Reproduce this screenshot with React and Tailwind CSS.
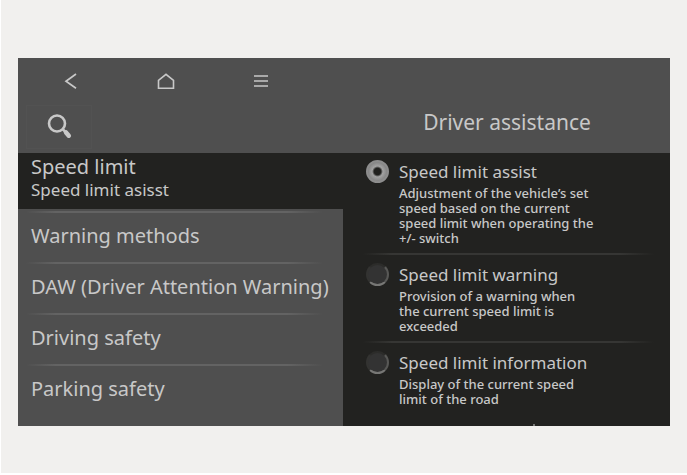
import { useState } from "react";

const menuItems = [
  "Warning methods",
  "DAW (Driver Attention Warning)",
  "Driving safety",
  "Parking safety",
];

const options = [
  {
    id: "assist",
    title: "Speed limit assist",
    description:
      "Adjustment of the vehicle’s set speed based on the current speed limit when operating the +/- switch",
  },
  {
    id: "warning",
    title: "Speed limit warning",
    description: "Provision of a warning when the current speed limit is exceeded",
  },
  {
    id: "information",
    title: "Speed limit information",
    description: "Display of the current speed limit of the road",
  },
];

const BackIcon = () => (
  <svg width="14" height="18" viewBox="0 0 14 18" fill="none" stroke="currentColor" strokeWidth="1.7">
    <path d="M12 2 2 9.200l10 7" />
  </svg>
);

const HomeIcon = () => (
  <svg width="18" height="18" viewBox="0 0 18 18" fill="none" stroke="currentColor" strokeWidth="1.6">
    <path d="M1.500 8.300 9 2.300l7.500 6v8h-15z" />
  </svg>
);

const MenuIcon = () => (
  <svg width="16" height="14" viewBox="0 0 16 14" fill="none" stroke="currentColor" strokeWidth="1.6">
    <path d="M1 2h14M1 7h14M1 12h14" />
  </svg>
);

const SearchIcon = () => (
  <svg width="26" height="26" viewBox="0 0 26 26" fill="none" stroke="currentColor">
    <circle cx="11" cy="9.500" r="8" strokeWidth="2.600" />
    <path d="m16.500 15 3 3" strokeWidth="2.500" />
    <path d="m20 18.500 2.800 3.200" strokeWidth="4.500" strokeLinecap="round" />
  </svg>
);

const App = () => {
  const [selected, setSelected] = useState("assist");

  return (
    <div className="min-h-screen border-b-2 border-l border-white bg-[#f1f0ee] pt-[58px] pr-[17px] pb-[47px] pl-[17px] font-['Noto_Sans',sans-serif] text-[#c8c8c8]">
      <div className="overflow-hidden bg-[#222220]">
        <header className="grid grid-cols-2 bg-[#4f4f4f]">
          <div>
            <nav className="grid h-[46px] grid-cols-[95px_95px_95px] pl-[5px]">
              <button type="button" aria-label="Back" className="flex items-center justify-center">
                <BackIcon />
              </button>
              <button type="button" aria-label="Home" className="flex items-center justify-center">
                <HomeIcon />
              </button>
              <button type="button" aria-label="Menu" className="flex items-center justify-center">
                <MenuIcon />
              </button>
            </nav>
            <div className="h-[49px] pt-px pl-2">
              <button
                type="button"
                aria-label="Search"
                className="flex h-11 w-[66px] items-center justify-center border border-[#525252]"
              >
                <SearchIcon />
              </button>
            </div>
          </div>
          <h1 className="pt-12 text-center text-[21px] leading-8">Driver assistance</h1>
        </header>

        <main className="grid grid-cols-[minmax(0,325fr)_minmax(0,327fr)]">
          <ul className="bg-[#4f4f4f] pb-[13px]">
            <li>
              <button type="button" className="block h-14 w-full bg-[#222220] px-[13px] pb-1.5 text-left">
                <span className="block text-xl leading-6">Speed limit</span>
                <span className="block text-[17px] leading-[22px]">Speed limit asisst</span>
              </button>
            </li>
            {menuItems.map((item) => (
              <li key={item} className="pt-0.5">
                <div className="mr-5 ml-2 h-0.5 bg-[linear-gradient(to_right,transparent,#636363_10%,#636363_88%,transparent)]" />
                <button
                  type="button"
                  className="block h-[47px] w-full px-[13px] pb-0.5 text-left text-xl whitespace-nowrap"
                >
                  {item}
                </button>
              </li>
            ))}
          </ul>

          <div role="radiogroup" aria-label="Speed limit" className="flex flex-col bg-[#222220]">
            {options.map((option, index) => (
              <div key={option.id}>
                {index > 0 && (
                  <div className="mr-4 mb-px ml-5 h-0.5 bg-[linear-gradient(to_right,transparent,#363634_10%,#363634_88%,transparent)]" />
                )}
                <div className="flex gap-2.5 pt-[7px] pb-[7px] pl-[23px]">
                  <input
                    type="radio"
                    name="speed-limit"
                    id={option.id}
                    checked={selected === option.id}
                    onChange={() => setSelected(option.id)}
                    className="size-[23px] shrink-0 appearance-none rounded-full border-2 border-t-[#2c2c2a] border-r-[#585856] border-b-[#777775] border-l-[#333331] bg-[#333333] checked:border-[#8d8d8d] checked:bg-[radial-gradient(circle,#20201e_25%,#a2a2a2_40%,#858585_70%)]"
                  />
                  <label htmlFor={option.id} className="block max-w-[198px]">
                    <span className="block text-[17px] leading-6 whitespace-nowrap">{option.title}</span>
                    <span className="mt-0.5 block text-[13px] leading-[15px] font-medium">{option.description}</span>
                  </label>
                </div>
              </div>
            ))}
            <div className="mt-auto mr-[135px] ml-auto h-0.5 w-0.5 bg-[#777775]" />
          </div>
        </main>
      </div>
    </div>
  );
};

export default App;
